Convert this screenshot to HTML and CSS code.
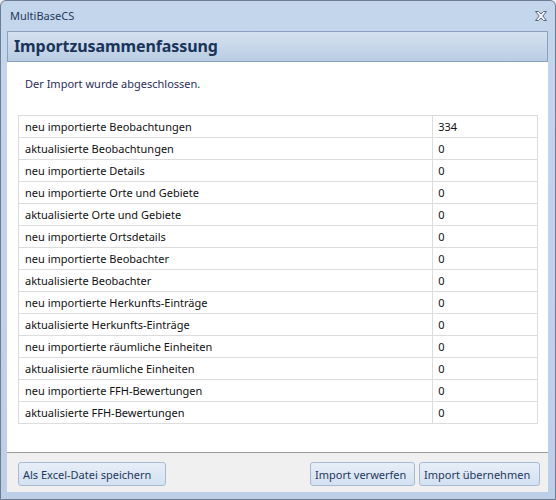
FILE: index.html
```html
<!DOCTYPE html>
<html lang="de">
<head>
<meta charset="utf-8">
<title>MultiBaseCS</title>
<link rel="stylesheet" href="styles.css">
</head>
<body>
<div class="window">
  <div class="titlebar">
    <span class="app-title">MultiBaseCS</span>
    <svg class="close" width="14" height="12" viewBox="0 0 14 12">
      <path d="M1.5 1.5 L4.5 1.5 L7 4 L9.5 1.5 L12.5 1.5 L8.8 6 L12.5 10.5 L9.5 10.5 L7 8 L4.5 10.5 L1.5 10.5 L5.2 6 Z" fill="#f2f5f9" stroke="#5a6578" stroke-width="1" stroke-linejoin="round"/>
    </svg>
  </div>
  <div class="header">Importzusammenfassung</div>
  <div class="content">
    <p class="message">Der Import wurde abgeschlossen.</p>
    <table class="summary">
      <tr><td class="label">neu importierte Beobachtungen</td><td class="value">334</td></tr>
      <tr><td class="label">aktualisierte Beobachtungen</td><td class="value">0</td></tr>
      <tr><td class="label">neu importierte Details</td><td class="value">0</td></tr>
      <tr><td class="label">neu importierte Orte und Gebiete</td><td class="value">0</td></tr>
      <tr><td class="label">aktualisierte Orte und Gebiete</td><td class="value">0</td></tr>
      <tr><td class="label">neu importierte Ortsdetails</td><td class="value">0</td></tr>
      <tr><td class="label">neu importierte Beobachter</td><td class="value">0</td></tr>
      <tr><td class="label">aktualisierte Beobachter</td><td class="value">0</td></tr>
      <tr><td class="label">neu importierte Herkunfts-Einträge</td><td class="value">0</td></tr>
      <tr><td class="label">aktualisierte Herkunfts-Einträge</td><td class="value">0</td></tr>
      <tr><td class="label">neu importierte räumliche Einheiten</td><td class="value">0</td></tr>
      <tr><td class="label">aktualisierte räumliche Einheiten</td><td class="value">0</td></tr>
      <tr><td class="label">neu importierte FFH-Bewertungen</td><td class="value">0</td></tr>
      <tr><td class="label">aktualisierte FFH-Bewertungen</td><td class="value">0</td></tr>
    </table>
  </div>
  <div class="footer">
    <button class="btn btn-excel">Als Excel-Datei speichern</button>
    <div class="spacer"></div>
    <button class="btn btn-discard">Import verwerfen</button>
    <button class="btn btn-accept">Import übernehmen</button>
  </div>
</div>
</body>
</html>
```

FILE: styles.css
```css
html, body {
  margin: 0;
  padding: 0;
  background: #e9edf2;
}

body {
  font-family: "Noto Sans", "Open Sans", sans-serif;
  font-size: 11px;
}

.window {
  width: 556px;
  height: 500px;
  box-sizing: border-box;
  border: 1px solid #6c7d93;
  border-radius: 6px 6px 0 0;
  background: linear-gradient(#c4d6ec, #bccfe7);
  padding: 0 7px 7px 6px;
  display: flex;
  flex-direction: column;
}

.titlebar {
  height: 30px;
  display: flex;
  align-items: center;
  justify-content: space-between;
  padding: 0 0 0 3px;
}

.app-title {
  color: #1e395b;
  font-size: 11px;
  line-height: 14px;
}

.close {
  display: block;
  margin-top: -1px;
}

.header {
  height: 29px;
  border: 1px solid #8aa0bd;
  background: linear-gradient(#d5e1ef, #bacde4);
  color: #1a3459;
  font-weight: bold;
  font-size: 16px;
  line-height: 29px;
  padding-left: 6px;
  letter-spacing: -0.1px;
}

.content {
  flex: 1;
  background: #ffffff;
  border-bottom: 1px solid #9a9a9a;
  padding: 14px 10px 0 11px;
}

.message {
  margin: 0 0 23px 7px;
  color: #2c2f5a;
  line-height: 16px;
}

.summary {
  width: 520px;
  border-collapse: collapse;
  color: #111111;
}

.summary td {
  border: 1px solid #dcdcdc;
  height: 22px;
  padding: 0 0 0 6px;
  line-height: 14px;
  box-sizing: border-box;
}

.summary td.label {
  width: 415px;
}

.summary td.value {
  width: 105px;
  padding-left: 5px;
}

.footer {
  height: 39px;
  background: #f0f0f0;
  display: flex;
  align-items: flex-start;
  padding: 9px 8px 0 11px;
  box-sizing: border-box;
  gap: 4px;
}

.spacer {
  flex: 1;
}

.btn {
  height: 24px;
  box-sizing: border-box;
  border: 1px solid #a6bad4;
  border-radius: 3px;
  background: linear-gradient(#e7eef8, #d4e1f1);
  color: #1e395b;
  font-family: "Noto Sans", "Open Sans", sans-serif;
  font-size: 11px;
  padding: 0 4px;
  margin: 0;
  text-align: left;
  white-space: nowrap;
}

.btn-excel { width: 148px; }
.btn-discard { width: 105px; }
.btn-accept { width: 121px; }
```
